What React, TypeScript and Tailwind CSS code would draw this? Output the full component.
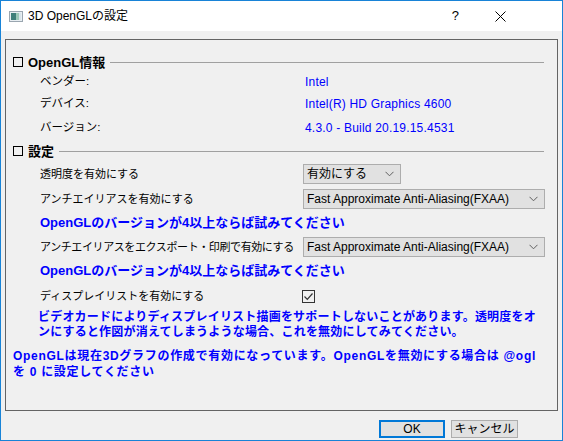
import React from "react";

const FONT = { fontFamily: '"Liberation Sans", "Noto Sans CJK JP", sans-serif' };

function Chevron() {
  return (
    <svg width="9" height="6" viewBox="0 0 9 6" className="shrink-0">
      <path d="M0.5 0.8 L4.5 4.8 L8.5 0.8" fill="none" stroke="#606060" strokeWidth="1" />
    </svg>
  );
}

function Select({ text, wide }: { text: string; wide?: boolean }) {
  return (
    <div
      className={`flex items-center justify-between h-[20px] border border-[#adadad] bg-[#e1e1e1] pl-[3px] pr-[6px] text-[12px] text-black ${
        wide ? "w-[242px]" : "w-[98px]"
      }`}
    >
      <span className="whitespace-nowrap leading-none">{text}</span>
      <Chevron />
    </div>
  );
}

function Header({ text }: { text: string }) {
  return (
    <div className="flex items-center h-full pl-[7px] pr-[13px]">
      <div className="w-[10px] h-[10px] border border-black shrink-0" />
      <span className="ml-[5px] font-bold text-[13px] leading-none whitespace-nowrap">{text}</span>
      <div className="flex-1 ml-[5px] h-px bg-[#a0a0a0]" />
    </div>
  );
}

export default function App() {
  return (
    <div
      className="w-[563px] h-[441px] border border-[#1883d7] flex flex-col bg-[#f0f0f0] overflow-hidden"
      style={FONT}
    >
      {/* Title bar */}
      <div className="h-[30px] bg-white flex items-center shrink-0">
        <svg width="14" height="11" viewBox="0 0 14 11" className="ml-[8px]">
          <rect x="0.5" y="0.5" width="13" height="10" fill="#e8eef2" stroke="#9aa6b0" />
          <rect x="2" y="2" width="5" height="7" fill="#3f7f7a" />
          <rect x="7" y="2" width="3" height="7" fill="#9cc8b8" />
          <rect x="10" y="2" width="2" height="7" fill="#d8e4ea" />
        </svg>
        <span className="ml-[5px] text-[12px] text-black whitespace-nowrap">3D OpenGLの設定</span>
        <div className="flex-1" />
        <span className="text-[13px] text-black mr-[36px]">?</span>
        <svg width="11" height="11" viewBox="0 0 11 11" className="mr-[56px]">
          <path d="M0.5 0.5 L10.5 10.5 M10.5 0.5 L0.5 10.5" stroke="#000" strokeWidth="1" />
        </svg>
      </div>

      {/* Body */}
      <div className="flex-1 flex flex-col pt-[8px] px-[4px] pb-[2px]">
        <div className="h-[372px] border border-[#646464] flex flex-col pt-[12px] text-[12px] text-black">
          <div className="h-[20px]">
            <Header text="OpenGL情報" />
          </div>
          <div className="h-[20px] flex items-center pl-[34px]">
            <span className="w-[265px] text-[11.5px]">ベンダー:</span>
            <span className="text-[#0000ff] tracking-[0.2px]">Intel</span>
          </div>
          <div className="h-[24px] flex items-center pl-[34px]">
            <span className="w-[265px] text-[11.5px]">デバイス:</span>
            <span className="text-[#0000ff] tracking-[0.2px]">Intel(R) HD Graphics 4600</span>
          </div>
          <div className="h-[24px] flex items-center pl-[34px]">
            <span className="w-[265px] text-[11.5px]">バージョン:</span>
            <span className="text-[#0000ff] tracking-[0.2px]">4.3.0 - Build 20.19.15.4531</span>
          </div>
          <div className="h-[22px]">
            <Header text="設定" />
          </div>
          <div className="h-[24px] flex items-center pl-[34px]">
            <span className="w-[263px] whitespace-nowrap text-[11px]">透明度を有効にする</span>
            <Select text="有効にする" />
          </div>
          <div className="h-[26px] flex items-center pl-[34px]">
            <span className="w-[263px] whitespace-nowrap text-[11px]">アンチエイリアスを有効にする</span>
            <Select text="Fast Approximate Anti-Aliasing(FXAA)" wide />
          </div>
          <div className="h-[22px] flex items-center pl-[34px] text-[#0000ff] font-bold text-[13px] whitespace-nowrap">
            OpenGLのバージョンが4以上ならば試みてください
          </div>
          <div className="h-[26px] flex items-center pl-[34px]">
            <span className="w-[263px] whitespace-nowrap text-[11px] tracking-[-0.4px]">アンチエイリアスをエクスポート・印刷で有効にする</span>
            <Select text="Fast Approximate Anti-Aliasing(FXAA)" wide />
          </div>
          <div className="h-[22px] flex items-center pl-[34px] text-[#0000ff] font-bold text-[13px] whitespace-nowrap">
            OpenGLのバージョンが4以上ならば試みてください
          </div>
          <div className="h-[28px] flex items-center pl-[34px]">
            <span className="w-[262px] whitespace-nowrap text-[11px]">ディスプレイリストを有効にする</span>
            <div className="w-[13px] h-[13px] border border-[#333333] bg-[#f0f0f0] flex items-center justify-center">
              <svg width="11" height="11" viewBox="0 0 11 11">
                <path d="M1.5 5.5 L4.3 8.3 L9.5 2.5" fill="none" stroke="#333" strokeWidth="1.2" />
              </svg>
            </div>
          </div>
          <div className="pl-[32px] text-[#0000ff] font-bold text-[12px] leading-[15px] tracking-[0.2px] whitespace-nowrap">
            ビデオカードによりディスプレイリスト描画をサポートしないことがあります。透明度をオ
            <br />
            ンにすると作図が消えてしまうような場合、これを無効にしてみてください。
          </div>
          <div className="mt-[8px] pl-[7px] text-[#0000ff] font-bold text-[12px] leading-[16px] tracking-[0.7px] whitespace-nowrap">
            OpenGLは現在3Dグラフの作成で有効になっています。OpenGLを無効にする場合は @ogl
            <br />
            を 0 に設定してください
          </div>
        </div>

        <div className="mt-[9px] flex justify-end pr-[40px] gap-[6px]">
          <div className="w-[66px] h-[18px] border-2 border-[#0078d7] bg-[#e1e1e1] flex items-center justify-center text-[12px] text-black">
            OK
          </div>
          <div className="w-[67px] h-[18px] border border-[#adadad] bg-[#e1e1e1] flex items-center justify-center text-[12px] text-black">
            キャンセル
          </div>
        </div>
      </div>
    </div>
  );
}
